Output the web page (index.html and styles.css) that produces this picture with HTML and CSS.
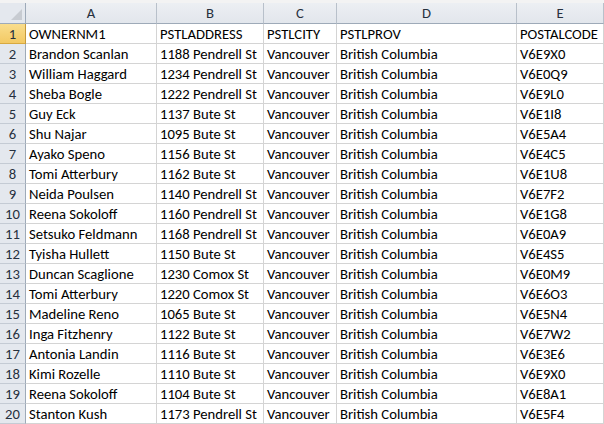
FILE: index.html
```html
<!DOCTYPE html>
<html>
<head>
<meta charset="utf-8">
<link rel="stylesheet" href="styles.css">
</head>
<body>
<div class="topstrip"></div>
<div class="sheet">
  <div class="corner"><span class="tri"></span></div>
  <div class="colhdr">A</div>
  <div class="colhdr">B</div>
  <div class="colhdr">C</div>
  <div class="colhdr">D</div>
  <div class="colhdr">E</div>

  <div class="rowhdr active">1</div><div class="cell">OWNERNM1</div><div class="cell">PSTLADDRESS</div><div class="cell">PSTLCITY</div><div class="cell">PSTLPROV</div><div class="cell">POSTALCODE</div>
  <div class="rowhdr">2</div><div class="cell">Brandon Scanlan</div><div class="cell">1188 Pendrell St</div><div class="cell">Vancouver</div><div class="cell">British Columbia</div><div class="cell">V6E9X0</div>
  <div class="rowhdr">3</div><div class="cell">William Haggard</div><div class="cell">1234 Pendrell St</div><div class="cell">Vancouver</div><div class="cell">British Columbia</div><div class="cell">V6E0Q9</div>
  <div class="rowhdr">4</div><div class="cell">Sheba Bogle</div><div class="cell">1222 Pendrell St</div><div class="cell">Vancouver</div><div class="cell">British Columbia</div><div class="cell">V6E9L0</div>
  <div class="rowhdr">5</div><div class="cell">Guy Eck</div><div class="cell">1137 Bute St</div><div class="cell">Vancouver</div><div class="cell">British Columbia</div><div class="cell">V6E1I8</div>
  <div class="rowhdr">6</div><div class="cell">Shu Najar</div><div class="cell">1095 Bute St</div><div class="cell">Vancouver</div><div class="cell">British Columbia</div><div class="cell">V6E5A4</div>
  <div class="rowhdr">7</div><div class="cell">Ayako Speno</div><div class="cell">1156 Bute St</div><div class="cell">Vancouver</div><div class="cell">British Columbia</div><div class="cell">V6E4C5</div>
  <div class="rowhdr">8</div><div class="cell">Tomi Atterbury</div><div class="cell">1162 Bute St</div><div class="cell">Vancouver</div><div class="cell">British Columbia</div><div class="cell">V6E1U8</div>
  <div class="rowhdr">9</div><div class="cell">Neida Poulsen</div><div class="cell">1140 Pendrell St</div><div class="cell">Vancouver</div><div class="cell">British Columbia</div><div class="cell">V6E7F2</div>
  <div class="rowhdr">10</div><div class="cell">Reena Sokoloff</div><div class="cell">1160 Pendrell St</div><div class="cell">Vancouver</div><div class="cell">British Columbia</div><div class="cell">V6E1G8</div>
  <div class="rowhdr">11</div><div class="cell">Setsuko Feldmann</div><div class="cell">1168 Pendrell St</div><div class="cell">Vancouver</div><div class="cell">British Columbia</div><div class="cell">V6E0A9</div>
  <div class="rowhdr">12</div><div class="cell">Tyisha Hullett</div><div class="cell">1150 Bute St</div><div class="cell">Vancouver</div><div class="cell">British Columbia</div><div class="cell">V6E4S5</div>
  <div class="rowhdr">13</div><div class="cell">Duncan Scaglione</div><div class="cell">1230 Comox St</div><div class="cell">Vancouver</div><div class="cell">British Columbia</div><div class="cell">V6E0M9</div>
  <div class="rowhdr">14</div><div class="cell">Tomi Atterbury</div><div class="cell">1220 Comox St</div><div class="cell">Vancouver</div><div class="cell">British Columbia</div><div class="cell">V6E6O3</div>
  <div class="rowhdr">15</div><div class="cell">Madeline Reno</div><div class="cell">1065 Bute St</div><div class="cell">Vancouver</div><div class="cell">British Columbia</div><div class="cell">V6E5N4</div>
  <div class="rowhdr">16</div><div class="cell">Inga Fitzhenry</div><div class="cell">1122 Bute St</div><div class="cell">Vancouver</div><div class="cell">British Columbia</div><div class="cell">V6E7W2</div>
  <div class="rowhdr">17</div><div class="cell">Antonia Landin</div><div class="cell">1116 Bute St</div><div class="cell">Vancouver</div><div class="cell">British Columbia</div><div class="cell">V6E3E6</div>
  <div class="rowhdr">18</div><div class="cell">Kimi Rozelle</div><div class="cell">1110 Bute St</div><div class="cell">Vancouver</div><div class="cell">British Columbia</div><div class="cell">V6E9X0</div>
  <div class="rowhdr">19</div><div class="cell">Reena Sokoloff</div><div class="cell">1104 Bute St</div><div class="cell">Vancouver</div><div class="cell">British Columbia</div><div class="cell">V6E8A1</div>
  <div class="rowhdr">20</div><div class="cell">Stanton Kush</div><div class="cell">1173 Pendrell St</div><div class="cell">Vancouver</div><div class="cell">British Columbia</div><div class="cell">V6E5F4</div>
</div>
</body>
</html>
```

FILE: styles.css
```css
html, body {
  margin: 0;
  padding: 0;
  background: #ffffff;
  overflow: hidden;
}
body {
  font-family: Carlito, Lato, "Liberation Sans", sans-serif;
  font-size: 14.67px;
  color: #000;
}
.topstrip {
  height: 3px;
  background: #f3f3f3;
}
.sheet {
  display: grid;
  grid-template-columns: 26px 131px 107px 73px 180px 1fr;
  grid-template-rows: 21px repeat(20, 20px);
}
.sheet > div {
  box-sizing: border-box;
  border-right: 1px solid #d4d4d4;
  border-bottom: 1px solid #d4d4d4;
  white-space: nowrap;
  overflow: hidden;
}
.corner {
  position: relative;
  background: #e4e8ee;
  border-right-color: #9eaab8 !important;
  border-bottom-color: #9eaab8 !important;
}
.tri {
  position: absolute;
  right: 3px;
  bottom: 3px;
  width: 0;
  height: 0;
  border-left: 11px solid transparent;
  border-bottom: 11px solid #c7cbd1;
}
.colhdr {
  background: linear-gradient(#eceff3, #e2e6ec);
  border-right-color: #b8c0ca !important;
  border-bottom-color: #9eaab8 !important;
  color: #27313e;
  display: flex;
  align-items: center;
  justify-content: center;
}
.rowhdr {
  background: #e4e8ee;
  border-right-color: #9eaab8 !important;
  border-bottom-color: #c4cbd4 !important;
  color: #27313e;
  display: flex;
  align-items: center;
  justify-content: center;
}
.rowhdr.active {
  background: linear-gradient(#f9dd8c, #f3c964);
  border-bottom-color: #d7a941 !important;
  border-right-color: #c4993a !important;
}
.cell {
  padding-left: 3px;
  display: flex;
  align-items: center;
}
```
